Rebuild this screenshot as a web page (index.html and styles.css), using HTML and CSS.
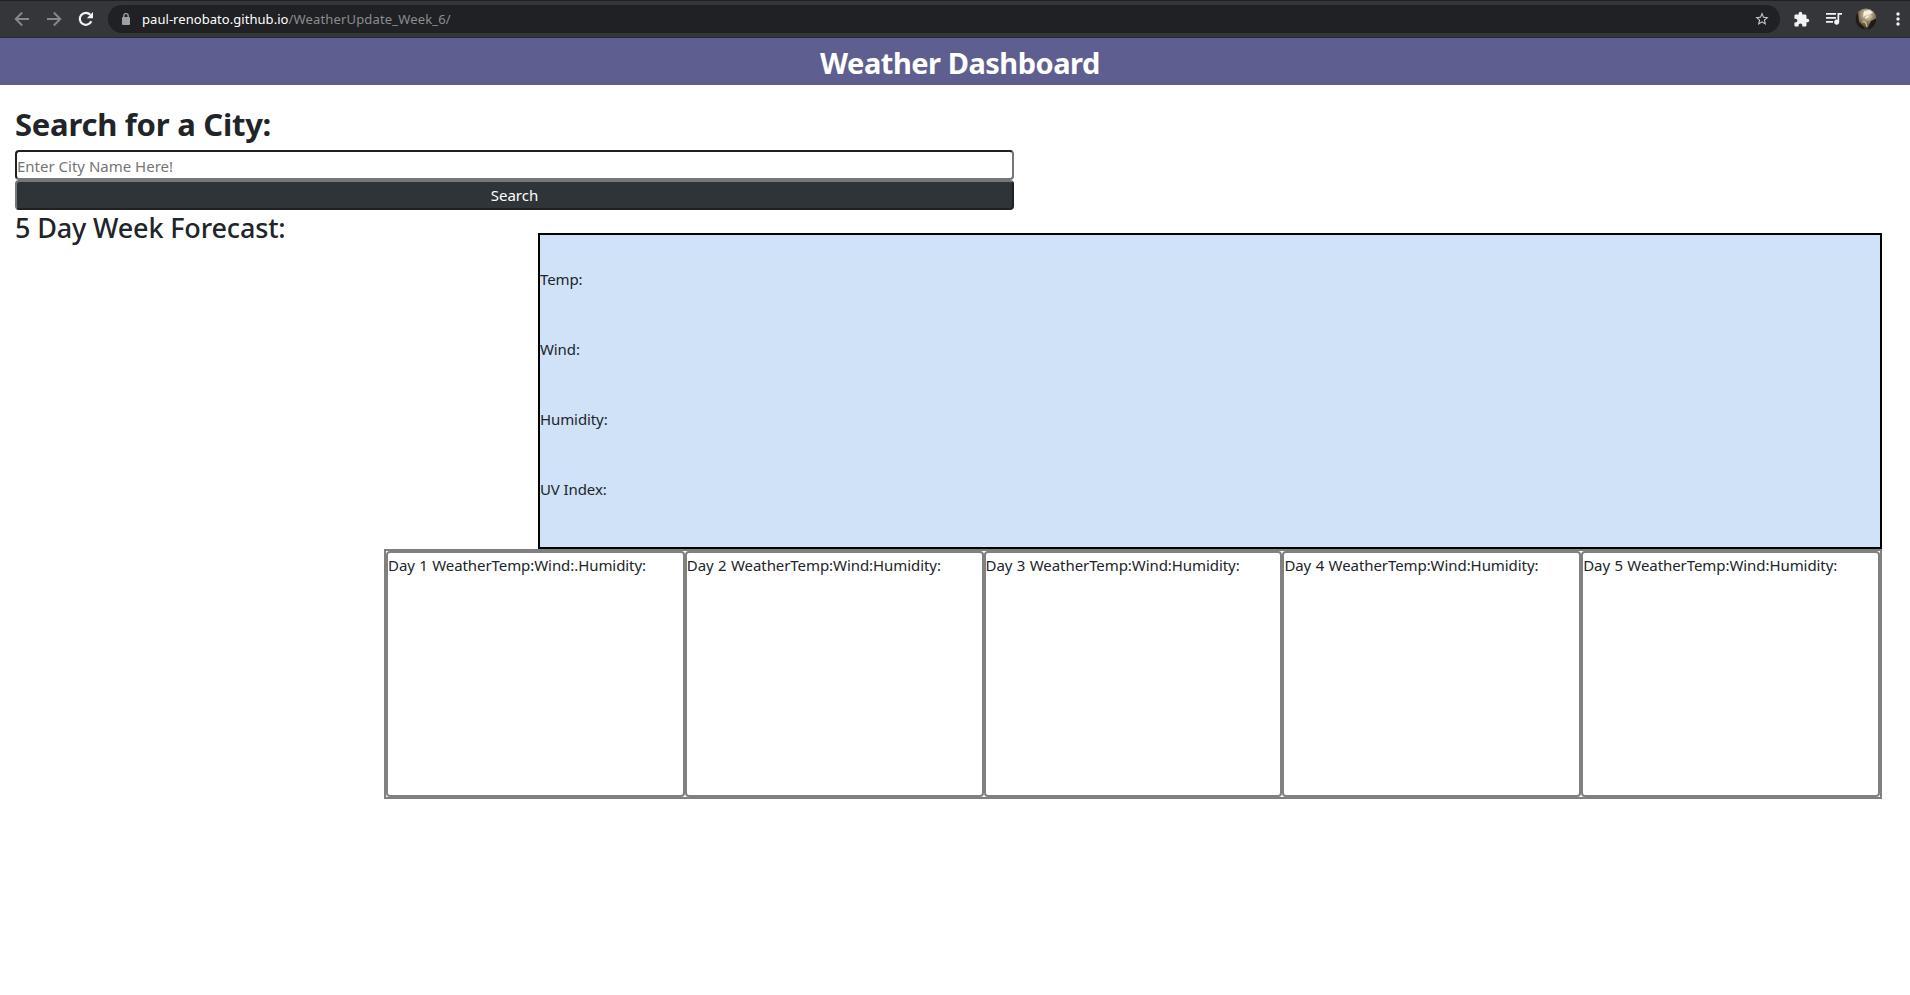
FILE: index.html
```html
<!DOCTYPE html>
<html lang="en">
<head>
<meta charset="utf-8">
<title>Weather Dashboard</title>
<link rel="stylesheet" href="styles.css">
</head>
<body>
<div class="toolbar">
  <svg class="nav back" width="16" height="16" viewBox="0 0 16 16"><path d="M15 8H2M8.2 1.5L1.7 8l6.5 6.5"/></svg>
  <svg class="nav forward" width="16" height="16" viewBox="0 0 16 16"><path d="M1 8h13M7.800 1.500L14.300 8l-6.500 6.500"/></svg>
  <svg class="nav reload" width="16" height="16" viewBox="0 0 16 16"><path d="M13.300 10.300A6 6 0 1 1 12.300 3.800"/><path class="solid" d="M15 1v6.200H8.800z"/></svg>
  <div class="address">
    <svg class="lock" width="10" height="12" viewBox="0 0 10 12"><rect x="1" y="4" width="8" height="8" rx="1"/><path d="M2.800 5V2.800a2.200 2.200 0 0 1 4.400 0V5"/></svg>
    <span class="url"><span class="host">paul-renobato.github.io</span><span class="path">/WeatherUpdate_Week_6/</span></span>
    <svg class="star" width="16" height="16" viewBox="0 0 24 24"><path d="M22 9.240l-7.190-.62L12 2 9.190 8.630 2 9.240l5.460 4.730L5.820 21 12 17.270 18.180 21l-1.630-7.030L22 9.240zM12 15.400l-3.760 2.270 1-4.280-3.320-2.880 4.380-.38L12 6.100l1.710 4.040 4.380.38-3.320 2.880 1 4.280L12 15.400z"/></svg>
  </div>
  <svg class="tool puzzle" width="17" height="17" viewBox="0 0 24 24"><path d="M20.500 11H19V7c0-1.100-.9-2-2-2h-4V3.500a2.500 2.500 0 0 0-5 0V5H4c-1.100 0-1.990.9-1.990 2v3.800H3.500c1.490 0 2.700 1.210 2.700 2.700s-1.210 2.700-2.700 2.700H2V20c0 1.100.9 2 2 2h3.800v-1.500c0-1.490 1.210-2.700 2.700-2.700s2.700 1.210 2.700 2.700V22H17c1.100 0 2-.9 2-2v-4h1.500a2.500 2.500 0 0 0 0-5z"/></svg>
  <svg class="tool queue" width="17" height="14" viewBox="0 0 17 14"><path d="M0 1h10v1.700H0zM0 5h10v1.700H0zM0 9h7v1.700H0zM11.500 1H16v1.800h-2.800v7.400a2.500 2.500 0 1 1-1.700-2.400z"/></svg>
  <svg class="avatar" width="22" height="22" viewBox="0 0 22 22">
    <defs>
      <clipPath id="face"><circle cx="11" cy="11" r="10.500"/></clipPath>
      <radialGradient id="shade" cx=".55" cy=".3" r=".75"><stop offset="0" stop-color="#e9dfca"/><stop offset=".35" stop-color="#a39478"/><stop offset=".75" stop-color="#51432f"/><stop offset="1" stop-color="#171718"/></radialGradient>
    </defs>
    <g clip-path="url(#face)"><path fill="url(#shade)" d="M0 0h22v22H0z"/><path fill="#1e1b19" d="M0 4l3 0 1 10 4 4 3 4H0zM16 13l6-3v12H12z"/><path fill="#f6efdf" d="M9 3l6-1 3 3-3 1-4 1-3 2zM10 9l6-2-5 4z"/><path d="M7 14q4-2 5 5M13 12l4-4" stroke="#cbb994" stroke-width="1.300" fill="none"/></g>
  </svg>
  <svg class="tool dots" width="4" height="14" viewBox="0 0 4 14"><circle cx="2" cy="2" r="1.700"/><circle cx="2" cy="7" r="1.700"/><circle cx="2" cy="12" r="1.700"/></svg>
</div>
<header class="banner"><h1>Weather Dashboard</h1></header>
<main class="page">
  <section class="search">
    <h2 class="search-title"><span>Search for a City:</span></h2>
    <input class="city" type="text" placeholder="Enter City Name Here!">
    <button class="submit">Search</button>
  </section>
  <div class="results">
    <h3 class="forecast-title">5 Day Week Forecast:</h3>
    <section class="current">
      <p>Temp:</p><p>Wind:</p><p>Humidity:</p><p>UV Index:</p>
    </section>
  </div>
  <section class="forecast">
    <div class="day">Day 1 WeatherTemp:Wind:.Humidity:</div>
    <div class="day">Day 2 WeatherTemp:Wind:Humidity:</div>
    <div class="day">Day 3 WeatherTemp:Wind:Humidity:</div>
    <div class="day">Day 4 WeatherTemp:Wind:Humidity:</div>
    <div class="day">Day 5 WeatherTemp:Wind:Humidity:</div>
  </section>
</main>
</body>
</html>
```
FILE: styles.css
```css
* { box-sizing: border-box; }
body {
  margin: 0;
  height: 995px;
  overflow: hidden;
  background: #fff;
  color: #212529;
  font: 15px/24px "Noto Sans", "Open Sans", sans-serif;
}
h1, h2, h3, p { margin: 0; }
.toolbar {
  display: flex;
  align-items: center;
  height: 38px;
  padding-left: 14px;
  padding-right: 10px;
  background: #35363a;
  border-top: 1px solid #202124;
  border-bottom: 1px solid #28292c;
}
.toolbar svg { flex: none; display: block; }
.nav { fill: none; stroke: #86888a; stroke-width: 1.900; margin-right: 16px; }
.reload { stroke: #f1f3f4; stroke-width: 2.200; margin-right: 14px; }
.reload .solid { fill: #f1f3f4; stroke: none; }
.address {
  display: flex;
  align-items: center;
  flex: 1;
  height: 28px;
  padding: 0 10px 0 13px;
  border-radius: 14px;
  background: #202124;
}
.lock { fill: #9aa0a6; }
.lock path { fill: none; stroke: #9aa0a6; stroke-width: 1.400; }
.url { flex: 1; margin-left: 11px; font-size: 13px; white-space: nowrap; }
.host { color: #fff; letter-spacing: .05px; }
.path { color: #8b8d90; letter-spacing: .16px; }
.star { fill: #c6c8ca; }
.tool { fill: #f1f3f4; }
.puzzle { margin-left: 13px; }
.queue { margin-left: 16px; }
.avatar { margin-left: 12px; }
.dots { margin-left: 19px; }
.banner {
  height: 47px;
  padding-left: 10px;
  background: #5e5e90;
  text-align: center;
}
.banner h1 { color: #fff; font-size: 29px; line-height: 50px; font-weight: 700; letter-spacing: -.48px; }
.page { padding: 15px 28px 0 15px; }
.search { display: flex; flex-direction: column; width: 999px; }
.search-title { height: 50px; font-size: 31px; line-height: 49px; font-weight: 700; letter-spacing: -.25px; }
.city, .submit {
  width: 100%;
  height: 30px;
  margin: 0;
  padding: 1px 0 0;
  border: 2px solid #767676;
  border-radius: 4px;
  font: inherit;
}
.city { border-color: #212124 #767676 #767676 #212124; background: #fff; }
.city::placeholder { color: #757575; opacity: 1; }
.submit {
  padding: 0;
  border-color: #767676 #212124 #212124 #767676;
  background: #2f3438;
  color: #fff;
  line-height: 24px;
}
.results { display: flex; justify-content: space-between; height: 339px; }
.forecast-title { font-size: 27px; line-height: 35px; font-weight: 500; letter-spacing: -.15px; white-space: nowrap; }
.current {
  width: 1344px;
  height: 316px;
  margin-top: 23px;
  padding-top: 32px;
  border: 2px solid #000;
  background: #cfe2f7;
}
.current p { height: 70px; letter-spacing: -.1px; }
.forecast {
  display: flex;
  width: 1498px;
  height: 250px;
  margin-left: auto;
  border: 2px solid #808080;
}
.day {
  flex: 1;
  border: 2px solid #808080;
  border-radius: 4px;
  letter-spacing: -.07px;
  word-spacing: .6px;
  white-space: nowrap;
}
```
